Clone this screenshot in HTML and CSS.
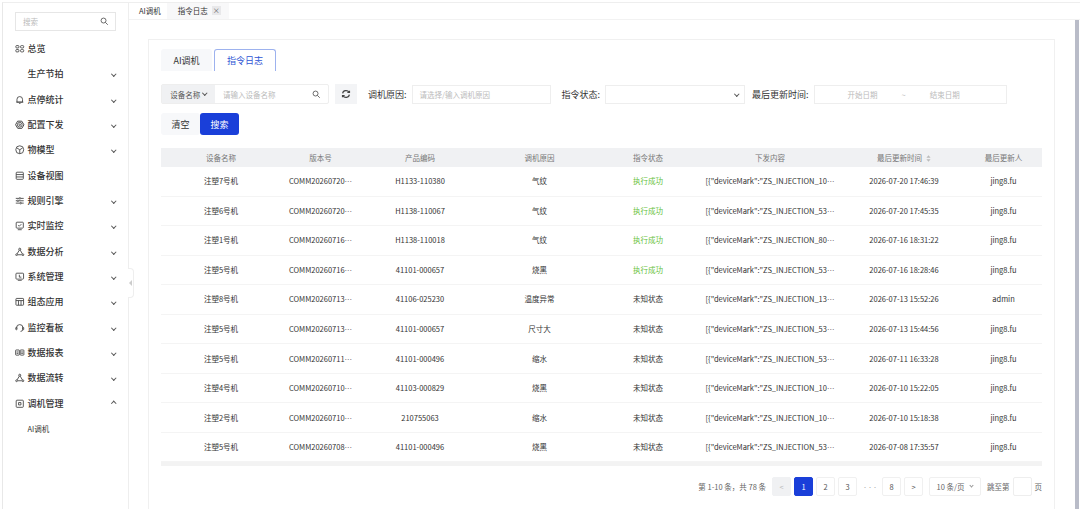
FILE: index.html
```html
<!DOCTYPE html>
<html>
	<head>
		<link rel="stylesheet" href="styles.css">
		<meta charset="UTF-8">
		<title>指令日志</title>
	</head>
	<body>
		<div class="page">
			<div class="side">
				<div class="side-search">
					<span>搜索</span>
					<svg class="ico" viewBox="0 0 12 12"><circle cx="5" cy="5" r="3.5"/><path d="M7.6 7.6 11 11"/></svg>
				</div>
				<ul class="menu">
					<li><svg class="ico" viewBox="0 0 12 12"><rect x="1" y="2" width="4" height="3" rx="1.2"/><rect x="7" y="2" width="4" height="3" rx="1.2"/><rect x="1" y="7" width="4" height="3" rx="1.2"/><rect x="7" y="7" width="4" height="3" rx="1.2"/></svg><span>总览</span></li>
					<li><i class="ico"></i><span>生产节拍</span><b class="arrow"></b></li>
					<li><svg class="ico" viewBox="0 0 12 12"><path d="M2.5 9V5.5a3.5 3.5 0 0 1 7 0V9zM1.5 9h9M5 11h2"/></svg><span>点停统计</span><b class="arrow"></b></li>
					<li><svg class="ico" viewBox="0 0 12 12"><path d="M6 .8 10.6 3.4v5.2L6 11.2 1.4 8.6V3.4z" transform="rotate(30 6 6)"/><circle cx="6" cy="6" r="3"/><circle cx="6" cy="6" r="1"/></svg><span>配置下发</span><b class="arrow"></b></li>
					<li><svg class="ico" viewBox="0 0 12 12"><circle cx="6" cy="6" r="5"/><path d="M2.5 3.8 6 6l3.5-2.2M6 6v5"/></svg><span>物模型</span><b class="arrow"></b></li>
					<li><svg class="ico" viewBox="0 0 12 12"><rect x="1.5" y="1.5" width="9" height="9" rx="1"/><path d="M1.5 4.5h9M1.5 7.5h9"/></svg><span>设备视图</span></li>
					<li><svg class="ico" viewBox="0 0 12 12"><path d="M1 3h4M7.5 3H11M1 6h1.5M5 6h6M1 9h5M8.5 9H11"/><circle cx="6.2" cy="3" r="1"/><circle cx="3.7" cy="6" r="1"/><circle cx="7.2" cy="9" r="1"/></svg><span>规则引擎</span><b class="arrow"></b></li>
					<li><svg class="ico" viewBox="0 0 12 12"><rect x="1.5" y="1.5" width="9" height="7.5" rx="1"/><path d="M3.5 11h5M4 5.5l1.5 1 2.5-2.5"/></svg><span>实时监控</span><b class="arrow"></b></li>
					<li><svg class="ico" viewBox="0 0 12 12"><circle cx="6" cy="2.8" r="1.3"/><circle cx="2" cy="9.8" r="1.1"/><circle cx="10" cy="9.8" r="1.1"/><path d="M5.4 4 2.6 8.8M6.6 4l2.8 4.8M3.5 9.8h5"/></svg><span>数据分析</span><b class="arrow"></b></li>
					<li><svg class="ico" viewBox="0 0 12 12"><rect x="1.2" y="1.5" width="9.6" height="7.5" rx="1"/><path d="M3.5 11h5M5.5 3.5v3h2.5"/></svg><span>系统管理</span><b class="arrow"></b></li>
					<li><svg class="ico" viewBox="0 0 12 12"><rect x="1.2" y="1.8" width="9.6" height="8.6" rx=".8"/><path d="M1.2 4.5h9.6M4.4 4.5v5.9M7.6 4.5v5.9"/></svg><span>组态应用</span><b class="arrow"></b></li>
					<li><svg class="ico" viewBox="0 0 12 12"><path d="M2 7V6a4 4 0 0 1 8 0v1M10 8a3 3 0 0 1-3 2.6"/><rect x="1" y="5.5" width="1.5" height="3" rx=".6"/><rect x="9.5" y="5.5" width="1.5" height="3" rx=".6"/></svg><span>监控看板</span><b class="arrow"></b></li>
					<li><svg class="ico" viewBox="0 0 12 12"><rect x=".8" y="2.5" width="4.6" height="6.5" rx=".6"/><rect x="6.6" y="2.5" width="4.6" height="6.5" rx=".6"/><path d="M2 5h2.2M7.8 5H10M2 6.8h2.2M7.8 6.8H10"/></svg><span>数据报表</span><b class="arrow"></b></li>
					<li><svg class="ico" viewBox="0 0 12 12"><circle cx="6" cy="2.8" r="1.3"/><circle cx="2" cy="9.8" r="1.1"/><circle cx="10" cy="9.8" r="1.1"/><path d="M5.4 4 2.6 8.8M6.6 4l2.8 4.8M3.5 9.8h5"/></svg><span>数据流转</span><b class="arrow"></b></li>
					<li><svg class="ico" viewBox="0 0 12 12"><rect x="1.5" y="1.5" width="9" height="9" rx="1"/><path d="M4.5 4.5h3v3h-3z"/></svg><span>调机管理</span><b class="arrow up"></b></li>
					<li class="sub"><span>AI调机</span></li>
				</ul>
				<div class="collapse"></div>
			</div>
			<div class="main">
				<div class="tabbar">
					<span class="tabbar-item">AI调机</span>
					<span class="tabbar-item cur">指令日志<em>×</em></span>
				</div>
				<div class="body">
					<div class="scroll-thumb"></div>
					<div class="card">
						<div class="tabs">
							<span class="tab">AI调机</span>
							<span class="tab active">指令日志</span>
						</div>
						<div class="filter">
							<div class="combo">
								<span class="combo-l">设备名称<b class="arrow dark"></b></span>
								<span class="combo-r">请输入设备名称<svg class="ico" viewBox="0 0 12 12"><circle cx="5" cy="5" r="3.5"/><path d="M7.6 7.6 11 11"/></svg></span>
							</div>
							<span class="refresh"><svg class="ico" viewBox="0 0 12 12"><path d="M2 5.2A4 3.6 0 0 1 9.6 4M10 6.8A4 3.6 0 0 1 2.4 8M7.6 4.2h2.6V2M4.4 7.8H1.8V10"/></svg></span>
							<label class="lab l1">调机原因:</label>
							<span class="inp reason">请选择/输入调机原因</span>
							<label class="lab l2">指令状态:</label>
							<span class="inp status"><b class="arrow dark"></b></span>
							<label class="lab l3">最后更新时间:</label>
							<span class="inp range"><span>开始日期</span><span>~</span><span>结束日期</span></span>
						</div>
						<div class="btns">
							<span class="btn">清空</span>
							<span class="btn primary">搜索</span>
						</div>
						<div class="tbl">
							<div class="row head">
								<span>设备名称</span><span>版本号</span><span>产品编码</span><span>调机原因</span><span>指令状态</span><span>下发内容</span><span>最后更新时间<svg class="sort" viewBox="0 0 6 8"><path d="M3 0 5.5 3H.5zM3 8 .5 5h5z"/></svg></span><span>最后更新人</span>
							</div>
							<div class="row"><span>注塑7号机</span><span>COMM20260720<em class="more">···</em></span><span>H1133-110380</span><span>气纹</span><span class="ok">执行成功</span><span>[{"deviceMark":"ZS_INJECTION_10<em class="more">···</em></span><span>2026-07-20 17:46:39</span><span>jing8.fu</span></div>
							<div class="row"><span>注塑6号机</span><span>COMM20260720<em class="more">···</em></span><span>H1138-110067</span><span>气纹</span><span class="ok">执行成功</span><span>[{"deviceMark":"ZS_INJECTION_53<em class="more">···</em></span><span>2026-07-20 17:45:35</span><span>jing8.fu</span></div>
							<div class="row"><span>注塑1号机</span><span>COMM20260716<em class="more">···</em></span><span>H1138-110018</span><span>气纹</span><span class="ok">执行成功</span><span>[{"deviceMark":"ZS_INJECTION_80<em class="more">···</em></span><span>2026-07-16 18:31:22</span><span>jing8.fu</span></div>
							<div class="row"><span>注塑5号机</span><span>COMM20260716<em class="more">···</em></span><span>41101-000657</span><span>烧黑</span><span class="ok">执行成功</span><span>[{"deviceMark":"ZS_INJECTION_53<em class="more">···</em></span><span>2026-07-16 18:28:46</span><span>jing8.fu</span></div>
							<div class="row"><span>注塑8号机</span><span>COMM20260713<em class="more">···</em></span><span>41106-025230</span><span>温度异常</span><span>未知状态</span><span>[{"deviceMark":"ZS_INJECTION_13<em class="more">···</em></span><span>2026-07-13 15:52:26</span><span>admin</span></div>
							<div class="row"><span>注塑5号机</span><span>COMM20260713<em class="more">···</em></span><span>41101-000657</span><span>尺寸大</span><span>未知状态</span><span>[{"deviceMark":"ZS_INJECTION_53<em class="more">···</em></span><span>2026-07-13 15:44:56</span><span>jing8.fu</span></div>
							<div class="row"><span>注塑5号机</span><span>COMM20260711<em class="more">···</em></span><span>41101-000496</span><span>缩水</span><span>未知状态</span><span>[{"deviceMark":"ZS_INJECTION_53<em class="more">···</em></span><span>2026-07-11 16:33:28</span><span>jing8.fu</span></div>
							<div class="row"><span>注塑4号机</span><span>COMM20260710<em class="more">···</em></span><span>41103-000829</span><span>烧黑</span><span>未知状态</span><span>[{"deviceMark":"ZS_INJECTION_10<em class="more">···</em></span><span>2026-07-10 15:22:05</span><span>jing8.fu</span></div>
							<div class="row"><span>注塑2号机</span><span>COMM20260710<em class="more">···</em></span><span>210755063</span><span>缩水</span><span>未知状态</span><span>[{"deviceMark":"ZS_INJECTION_10<em class="more">···</em></span><span>2026-07-10 15:18:38</span><span>jing8.fu</span></div>
							<div class="row"><span>注塑5号机</span><span>COMM20260708<em class="more">···</em></span><span>41101-000496</span><span>烧黑</span><span>未知状态</span><span>[{"deviceMark":"ZS_INJECTION_53<em class="more">···</em></span><span>2026-07-08 17:35:57</span><span>jing8.fu</span></div>
						</div>
						<div class="hbar"></div>
						<div class="pager">
							<span class="total">第 1-10 条，共 78 条</span>
							<span class="pg off">&lt;</span>
							<span class="pg on">1</span>
							<span class="pg">2</span>
							<span class="pg">3</span>
							<span class="dots">···</span>
							<span class="pg">8</span>
							<span class="pg">&gt;</span>
							<span class="size">10 条/页<b class="arrow"></b></span>
							<span class="jump">跳至第</span>
							<span class="pg-input"></span>
							<span class="jump">页</span>
						</div>
					</div>
				</div>
			</div>
		</div>
	</body>
</html>
```
FILE: styles.css
```css
*{
	box-sizing:border-box;
}
html,body{
	margin:0;
	padding:0;
	height:100%;
	overflow:hidden;
	background:#fff;
}
body{
	font-family:"Noto Sans CJK SC","Noto Sans",sans-serif;
	font-size:7.5px;
	color:#333;
}
ul{
	margin:0;
	padding:0;
	list-style:none;
}

.page{
	display:flex;
	height:509px;
	margin:2px 0 0 2px;
	border-top:1px solid #eee;
	border-left:1px solid #e8e8e8;
}

.ico{
	width:9.5px;
	height:9.5px;
	flex:none;
	display:block;
	fill:none;
	stroke:#444;
	stroke-width:1.1;
}
.arrow{
	width:3.5px;
	height:3.5px;
	display:block;
	flex:none;
	border-right:1px solid #555;
	border-bottom:1px solid #555;
	transform:rotate(45deg);
}
.arrow.up{
	transform:rotate(225deg);
}

/* sidebar */
.side{
	width:126px;
	flex:none;
	border-right:1px solid #eee;
	position:relative;
	padding:9px 12px 0 12px;
}
.side-search{
	height:19px;
	display:flex;
	align-items:center;
	justify-content:space-between;
	padding:0 7px 0 7px;
	border:1px solid #e6e6e6;
	color:#bbb;
}
.side-search .ico{
	width:8.5px;
	height:8.5px;
}
.menu{
	margin:5px -12px 0 -12px;
}
.menu li{
	height:25.33px;
	display:flex;
	align-items:center;
	padding:0 13px 0 12px;
	font-size:9px;
	font-weight:500;
	color:#333;
}
.menu li span{
	flex:1;
	margin-left:3px;
}
.menu .sub{
	font-size:7.5px;
	font-weight:400;
}
.menu .sub span{
	margin-left:12.5px;
}
.collapse{
	position:absolute;
	left:125px;
	top:265px;
	width:6px;
	height:30px;
	background:#fff;
	border:1px solid #eee;
	border-left:none;
	border-radius:0 4px 4px 0;
}
.collapse:after{
	content:"";
	position:absolute;
	left:1px;
	top:11px;
	border:3px solid transparent;
	border-left:none;
	border-right-color:#ccc;
}

/* top tabs */
.main{
	flex:1;
	min-width:0;
}
.tabbar{
	height:17px;
	display:flex;
	border-bottom:1px solid #f2f2f2;
}
.tabbar-item{
	display:flex;
	align-items:center;
	padding:0 6px 1px 10px;
	color:#333;
}
.tabbar-item.cur{
	width:62px;
	padding:0 8px 1px 11px;
	justify-content:space-between;
	background:#f8f8f9;
}
.tabbar-item em{
	width:9px;
	height:9px;
	font-style:normal;
	font-size:7px;
	line-height:9px;
	text-align:center;
	background:#e8e8ea;
	color:#555;
}
.body{
	position:relative;
	padding:19px 23px 0 19px;
}
.scroll-thumb{
	position:absolute;
	right:1px;
	top:0;
	width:4px;
	height:490px;
	background:#b9bcc8;
}
.card{
	width:907px;
	height:480px;
	padding:9px 13px 0 12px;
	border:1px solid #f0f0f0;
}

.tabs{
	display:flex;
	gap:2px;
}
.tab{
	width:51px;
	height:22px;
	display:flex;
	align-items:center;
	justify-content:center;
	font-size:9px;
	background:#f7f8fa;
	border-radius:3px 3px 0 0;
}
.tab.active{
	width:62px;
	background:#fff;
	color:#2f55d4;
	border:1px solid #9db2ee;
	border-bottom:none;
}

.filter{
	display:flex;
	align-items:center;
	margin-top:13px;
	height:20px;
}
.combo{
	display:flex;
	width:168px;
	height:20px;
	border:1px solid #eee;
	border-radius:2px;
}
.combo-l{
	width:53px;
	display:flex;
	align-items:center;
	justify-content:center;
	gap:3px;
	background:#f0f1f3;
	color:#555;
}
.combo-l .arrow{
	margin-top:-2px;
}
.combo-r{
	flex:1;
	display:flex;
	align-items:center;
	justify-content:space-between;
	padding:0 8px 0 8px;
	color:#bbb;
}
.combo-r .ico{
	width:8.5px;
	height:8.5px;
}
.refresh{
	width:22px;
	height:20px;
	margin-left:6px;
	display:flex;
	align-items:center;
	justify-content:center;
	background:#f3f4f6;
}
.refresh .ico{
	width:10px;
	height:10px;
	stroke-width:1.4;
}
.lab{
	font-size:9px;
	color:#333;
	white-space:nowrap;
}
.l1{
	margin-left:11px;
}
.l2{
	margin-left:11px;
}
.l3{
	margin-left:7px;
}
.inp{
	height:19px;
	margin-left:5px;
	display:flex;
	align-items:center;
	border:1px solid #eee;
	color:#bbb;
}
.reason{
	width:139px;
	padding-left:7px;
}
.status{
	width:140px;
	justify-content:flex-end;
	padding-right:6px;
}
.range{
	width:193px;
	padding-left:33px;
	gap:24px;
}

.btns{
	display:flex;
	margin-top:9px;
}
.btn{
	width:39px;
	height:22px;
	display:flex;
	align-items:center;
	justify-content:center;
	font-size:9px;
	background:#f7f8fa;
	border-radius:3px;
}
.btn.primary{
	background:#1a3fd9;
	color:#fff;
}

.tbl{
	margin-top:13px;
	width:881px;
}
.row{
	display:grid;
	grid-template-columns:120px 79px 120px 119px 98px 146px 122px 77px;
	height:29.55px;
	padding-bottom:1px;
	align-items:center;
	text-align:center;
	white-space:nowrap;
	border-bottom:1px solid #f4f4f4;
}
.more{
	font-family:"Liberation Sans",sans-serif;
	font-style:normal;
}
.head{
	height:19px;
	padding-bottom:0;
	background:#f0f1f3;
	color:#777;
	border-bottom:none;
}
.sort{
	width:5px;
	height:7px;
	margin-left:4px;
	vertical-align:-1px;
	fill:#bbb;
}
.ok{
	color:#67c23a;
}
.hbar{
	height:4px;
	width:881px;
	background:#f3f3f3;
}

.pager{
	display:flex;
	align-items:center;
	justify-content:flex-end;
	width:881px;
	height:19px;
	margin-top:11px;
	color:#666;
}
.total{
	margin-right:6px;
}
.pg{
	width:19px;
	height:19px;
	margin-right:3px;
	display:flex;
	align-items:center;
	justify-content:center;
	border:1px solid #f0f0f0;
	border-radius:2px;
	color:#555;
}
.pg.off{
	background:#f0f1f3;
	border-color:#f0f1f3;
	color:#bbb;
}
.pg.on{
	background:#1a3fd9;
	border-color:#1a3fd9;
	color:#fff;
}
.dots{
	width:22px;
	text-align:center;
	color:#aaa;
	font-family:"Liberation Sans",sans-serif;
	font-size:9px;
	letter-spacing:2px;
}
.size{
	width:52px;
	height:19px;
	margin-left:3px;
	display:flex;
	align-items:center;
	justify-content:center;
	gap:6px;
	border:1px solid #f0f0f0;
	border-radius:2px;
}
.size .arrow{
	width:3px;
	height:3px;
	border-color:#999;
	margin-top:-2px;
}
.jump{
	margin-left:6px;
	white-space:nowrap;
}
.pg-input{
	width:19px;
	height:19px;
	margin-left:3px;
	border:1px solid #eee;
	border-radius:2px;
}
.pg-input + .jump{
	margin-left:3px;
}
```
